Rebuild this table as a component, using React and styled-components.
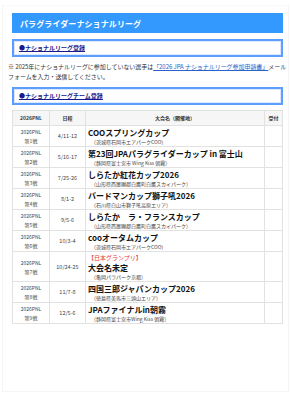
import React from 'react';
import styled, { createGlobalStyle } from 'styled-components';

const GlobalStyle = createGlobalStyle`
  html, body {
    margin: 0;
    padding: 0;
    background: #ffffff;
  }
  body {
    font-family: "Noto Sans CJK JP", "Noto Sans", sans-serif;
    color: #222222;
  }
`;

const Card = styled.div`
  margin: 5px 3px 0 2px;
  padding: 7px 5px 48px 9px;
  border: 1px solid #f4f4f4;
  border-top-color: #fafafa;
  min-height: 330px;
`;

const Title = styled.h1`
  margin: 0;
  height: 20px;
  padding: 0 8px;
  display: flex;
  align-items: center;
  background: #3399ff;
  color: #ffffff;
  font-size: 8px;
  font-weight: 700;
  letter-spacing: 0.1px;
`;

const LinkBox = styled.div`
  margin-top: ${(p) => p.$top}px;
  height: 18px;
  box-sizing: border-box;
  padding: 0 5px;
  display: flex;
  align-items: center;
  border: 2px solid #5c9dff;
  box-shadow: inset 0 0 0 1px #dbe8ff;
`;

const BoxLink = styled.a`
  color: #1a1a8c;
  font-size: 6px;
  line-height: 8px;
  font-weight: 700;
  text-decoration: underline;
`;

const Note = styled.p`
  margin: 5px -4.5px 0 -4px;
  font-size: 6px;
  line-height: 10px;
  letter-spacing: -0.05px;
  color: #333333;
`;

const NoteLink = styled.a`
  color: #2a62c9;
  text-decoration: underline;
`;

const Table = styled.table`
  margin-top: 5px;
  width: 100%;
  border-collapse: collapse;
  table-layout: fixed;
  border: 1px solid #e2e2e2;
  font-size: 5px;
  line-height: 8px;
`;

const Th = styled.th`
  width: ${(p) => p.$w || 'auto'};
  height: 14px;
  padding: 0;
  border: 1px solid #e2e2e2;
  background: #f6f6f6;
  font-size: 5px;
  font-weight: 700;
  color: #333333;
  text-align: center;
`;

const Td = styled.td`
  padding: 1px 2px;
  border: 1px solid #e2e2e2;
  font-size: 5px;
  line-height: 8px;
  text-align: ${(p) => p.$align || 'center'};
  vertical-align: middle;
`;

const Round = styled.div`
  font-size: 5px;
  line-height: 9px;
  color: #444444;
`;

const DateText = styled.span`
  font-size: 5.5px;
  color: #444444;
`;

const Badge = styled.div`
  font-size: 6px;
  line-height: 9px;
  color: #e53935;
`;

const EventName = styled.div`
  font-size: 8px;
  font-weight: 700;
  line-height: 11px;
  color: #111111;
`;

const Venue = styled.div`
  font-size: 5px;
  line-height: 7px;
  color: #444444;
  padding-left: 3px;
`;

const events = [
  { no: 1, date: '4/11-12', name: 'COOスプリングカップ', venue: '（茨城県石岡市エアパークCOO）' },
  { no: 2, date: '5/16-17', name: '第23回JPAパラグライダーカップ in 富士山', venue: '（静岡県富士宮市 Wing Kiss 朝霧）' },
  { no: 3, date: '7/25-26', name: 'しらたか紅花カップ2026', venue: '（山形県西置賜郡白鷹町白鷹スカイパーク）' },
  { no: 4, date: '8/1-2', name: 'バードマンカップ獅子吼2026', venue: '（石川県白山市獅子吼高原エリア）' },
  { no: 5, date: '9/5-6', name: 'しらたか　ラ・フランスカップ', venue: '（山形県西置賜郡白鷹町白鷹スカイパーク）' },
  { no: 6, date: '10/3-4', name: 'cooオータムカップ', venue: '（茨城県石岡市エアパークCOO）' },
  { no: 7, date: '10/24-25', badge: '【日本グランプリ】', name: '大会名未定', venue: '（亀岡パラパーク京都）' },
  { no: 8, date: '11/7-8', name: '四国三郎ジャパンカップ2026', venue: '（徳島県美馬市三頭山エリア）' },
  { no: 9, date: '12/5-6', name: 'JPAファイナルin朝霧', venue: '（静岡県富士宮市Wing Kiss 朝霧）' },
];

export default function App() {
  return (
    <>
      <GlobalStyle />
      <Card>
        <Title>パラグライダーナショナルリーグ</Title>
        <LinkBox $top={6}>
          <BoxLink>●ナショナルリーグ登録</BoxLink>
        </LinkBox>
        <Note>
          ※ 2025年にナショナルリーグに参加していない選手は
          <NoteLink>「2026 JPA ナショナルリーグ参加申請書」</NoteLink>
          メールフォームを入力・送信してください。
        </Note>
        <LinkBox $top={5}>
          <BoxLink>●ナショナルリーグチーム登録</BoxLink>
        </LinkBox>
        <Table>
          <thead>
            <tr>
              <Th $w="36px">2026PNL</Th>
              <Th $w="35px">日程</Th>
              <Th>大会名（開催地）</Th>
              <Th $w="17px">受付</Th>
            </tr>
          </thead>
          <tbody>
            {events.map((ev) => (
              <tr key={ev.no}>
                <Td>
                  <Round>2026PNL</Round>
                  <Round>第{ev.no}戦</Round>
                </Td>
                <Td>
                  <DateText>{ev.date}</DateText>
                </Td>
                <Td $align="left">
                  {ev.badge && <Badge>{ev.badge}</Badge>}
                  <EventName>{ev.name}</EventName>
                  <Venue>{ev.venue}</Venue>
                </Td>
                <Td />
              </tr>
            ))}
          </tbody>
        </Table>
      </Card>
    </>
  );
}
